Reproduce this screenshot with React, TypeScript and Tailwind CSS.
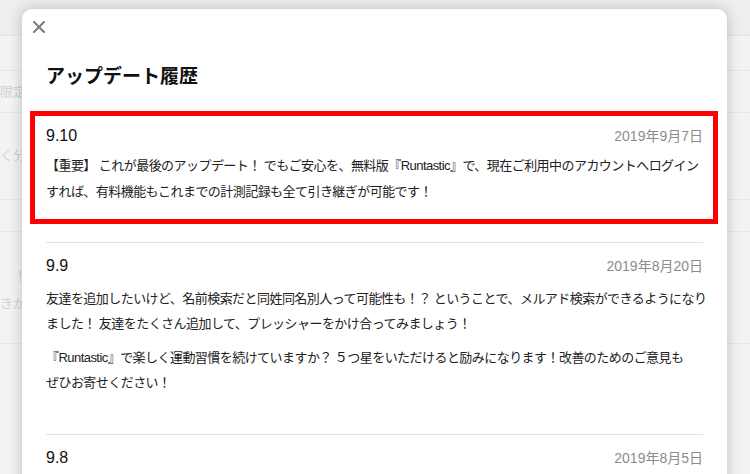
import React from "react";

const font = "font-['Liberation_Sans','Noto_Sans_CJK_JP',sans-serif]";
const body = "text-[13px] tracking-[-0.55px] text-[#222] whitespace-nowrap";

function CloseIcon() {
  return (
    <svg width="12" height="12" viewBox="0 0 12 12" fill="none">
      <path d="M1 1L11 11M11 1L1 11" stroke="#7c7c7c" strokeWidth="2" strokeLinecap="round" />
    </svg>
  );
}

function ItemHeader({ version, date }: { version: string; date: string }) {
  return (
    <div className="flex h-5 items-center justify-between">
      <span className="text-[16px] text-[#111]">{version}</span>
      <span className="text-[14px] text-[#8c8c8c]">{date}</span>
    </div>
  );
}

function Background() {
  return (
    <div className="flex h-full flex-col bg-[#f3f3f3] text-[13px] text-[#d2d2d2]">
      <div className="h-[36px] border-b border-[#e6e6e6] bg-[#eeeeee]" />
      <div className="h-[35px] border-b border-[#e6e6e6]" />
      <div className="flex h-[42px] items-center border-b border-[#e6e6e6]">
        <span className="w-[22px] overflow-hidden whitespace-nowrap">限定</span>
      </div>
      <div className="flex h-[87px] items-center border-b border-[#e6e6e6]">
        <span className="w-[22px] overflow-hidden whitespace-nowrap">く分</span>
      </div>
      <div className="h-[32px] border-b border-[#e6e6e6]" />
      <div className="flex h-[112px] flex-col justify-center border-b border-[#e6e6e6] pt-1 leading-[28px]">
        <span className="w-[22px] overflow-hidden pl-[14px] whitespace-nowrap">！</span>
        <span className="w-[22px] overflow-hidden whitespace-nowrap">きが</span>
      </div>
    </div>
  );
}

export default function App() {
  return (
    <div className={`relative h-[474px] w-[750px] overflow-hidden ${font}`}>
      <Background />

      <div className="absolute top-[9px] left-[22px] h-[520px] w-[705px] rounded-[10px] bg-white shadow-[0_0_14px_rgba(0,0,0,0.22)]">
        <div className="pt-[12px] pl-[11px]">
          <button type="button" className="flex h-3 w-3 items-center justify-center">
            <CloseIcon />
          </button>
        </div>

        <div className="px-6">
          <h1 className="mt-[30px] text-[19px] leading-[28px] font-bold text-[#111]">
            アップデート履歴
          </h1>

          <div className="mt-[20px] -ml-4 -mr-[15px] border-[5px] border-[#ff0000] pt-[10px] pr-[10px] pb-[14px] pl-[11px]">
            <ItemHeader version="9.10" date="2019年9月7日" />
            <p className={`mt-[7px] leading-[26px] ${body}`}>
              【重要】 これが最後のアップデート！ でもご安心を、無料版『Runtastic』で、現在ご利用中のアカウントへログイン
              <br />
              すれば、有料機能もこれまでの計測記録も全て引き継ぎが可能です！
            </p>
          </div>

          <div className="mt-[18px] border-t border-[#e2e2e2] pt-[13px] pb-[39px]">
            <ItemHeader version="9.9" date="2019年8月20日" />
            <p className={`mt-[10px] leading-[25px] ${body}`}>
              友達を追加したいけど、名前検索だと同姓同名別人って可能性も！？ ということで、メルアド検索ができるようになり
              <br />
              ました！ 友達をたくさん追加して、プレッシャーをかけ合ってみましょう！
            </p>
            <p className={`mt-[9px] leading-[25px] ${body}`}>
              『Runtastic』で楽しく運動習慣を続けていますか？ ５つ星をいただけると励みになります！改善のためのご意見も
              <br />
              ぜひお寄せください！
            </p>
          </div>

          <div className="border-t border-[#e2e2e2] pt-[13px]">
            <ItemHeader version="9.8" date="2019年8月5日" />
          </div>
        </div>
      </div>
    </div>
  );
}
